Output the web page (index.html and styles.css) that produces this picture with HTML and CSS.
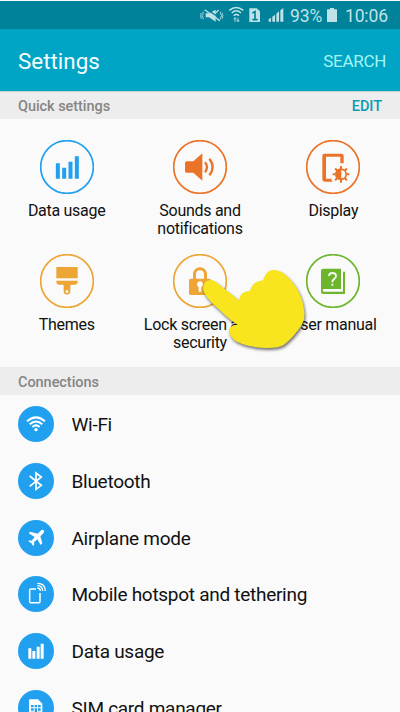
FILE: index.html
```html
<!DOCTYPE html>
<html lang="en">
<head>
<meta charset="utf-8">
<title>Settings</title>
<link rel="stylesheet" href="styles.css">
</head>
<body>
<div class="screen">
  <div class="status">
    <svg class="status-icons" viewBox="0 0 270 87">
      <g fill="none" stroke="#bfe2e8" stroke-width="2.6">
        <path d="M17 40h10l20-11v36l-20-13H17z" fill="#bfe2e8" stroke="none"/>
        <path d="M16 25l48 32" stroke="#00829b" stroke-width="4"/>
        <path d="M14 29l46 33M56 30L45 41M56 61L46 51" stroke-width="3.5"/>
        <path d="M9 35v8l-3 4 3 5v6M3 39v5l-2 3 2 4v5M62 35v8l3 4-3 5v6M67 39v5l2 3-2 4v5"/>
        <path d="M88 31q20-17 42 0M95 39q14-13 28 0M101 47q8-8 16 0" stroke-width="4.500"/>
        <path d="M105 66V53M101 58l4-5 4 5M114 53v12M110 60l4 5 4-5"/>
      </g>
      <g fill="#bfe2e8">
        <path d="M148 25h22l10 9v32h-32z"/>
        <path d="M206 65v-7l7-5v12zM217 65V50l8-6v21zM229 65V41l8-7v31zM241 65V31l9-7v41z"/>
      </g>
      <path d="M157 39l8-4v25M157 59h16" fill="none" stroke="#00829b" stroke-width="5"/>
    </svg>
    <span class="battery-text">93%</span>
    <svg class="battery" viewBox="0 0 30 42"><path fill="#bfe2e8" d="M9 0h12v4h9v38H0V4h9z"/></svg>
    <span class="clock">10:06</span>
  </div>
  <header class="appbar"><h1>Settings</h1><span class="search">SEARCH</span></header>
  <div class="section"><span>Quick settings</span><span class="edit">EDIT</span></div>
  <div class="quick">
    <div class="tile blue">
      <svg viewBox="0 0 162 162"><circle class="ring" cx="81" cy="81" r="79"/><path d="M47.500 70h12v46h-12zM66.500 83h12v33h-12zM85.500 65h12v51h-12zM104.500 49h12v67h-12z"/></svg>
      <p>Data usage</p>
    </div>
    <div class="tile orange">
      <svg viewBox="0 0 162 162"><circle class="ring" cx="81" cy="81" r="79"/><path d="M41 64h20l27-24v82L61 98H41q-5 0-5-5V69q0-5 5-5z"/><path class="line" stroke-width="7" d="M96 67q12 14 0 30M109 56q20 25 0 50"/></svg>
      <p>Sounds and<br>notifications</p>
    </div>
    <div class="tile orange">
      <svg viewBox="0 0 162 162"><circle class="ring" cx="81" cy="81" r="79"/><path d="M56 41h50q7 0 7 7v22h-10V50H60v66h15l5 9H56q-7 0-7-7V48q0-7 7-7z"/><path class="line" stroke-width="6" d="M105 78v50M80 103h50M87.300 85.300l35.400 35.400M122.700 85.300l-35.400 35.400"/><circle cx="105" cy="103" r="18"/><path fill="#fafafa" d="M106 91a12 12 0 010 24z"/></svg>
      <p>Display</p>
    </div>
    <div class="tile amber">
      <svg viewBox="0 0 162 162"><circle class="ring" cx="81" cy="81" r="79"/><path fill-rule="evenodd" d="M49 39h64v34H49zM49 80h64v3q0 9-9 9H94q-3 0-3 4v16a10 10 0 11-20 0V96q0-4-3-4H58q-9 0-9-9zM81 108a4.500 4.500 0 100 9 4.500 4.500 0 000-9z"/></svg>
      <p>Themes</p>
    </div>
    <div class="tile amber">
      <svg viewBox="0 0 162 162"><circle class="ring" cx="81" cy="81" r="79"/><path class="line" stroke-width="9" d="M64.500 76V61a16.500 17 0 0133 0v15"/><rect x="48" y="74" width="66" height="49" rx="5"/><path fill="#fafafa" d="M77 113V99a9 9 0 118 0v14z"/></svg>
      <p>Lock screen and<br>security</p>
    </div>
    <div class="tile green">
      <svg viewBox="0 0 162 162"><circle class="ring" cx="81" cy="81" r="79"/><path d="M51 44h54v61H54q-4 0-4 4t4 4h57V53h6v67H52q-7 0-7-7V50q0-6 6-6z"/><path fill="none" stroke="#fafafa" stroke-width="5.500" d="M69 66q0-9 10-9 11 0 11 9 0 5-6 9-5 4-5 10M79 89v6"/></svg>
      <p>User manual</p>
    </div>
  </div>
  <div class="section"><span>Connections</span></div>
  <ul class="list">
    <li><svg viewBox="0 0 108 108"><circle cx="54" cy="54" r="54"/><g class="white-line" stroke-width="6"><path d="M27 46q27-24 54 0M35 55q19-17 38 0M43 63q11-10 22 0"/></g><circle class="white" cx="54" cy="71" r="5"/></svg><span>Wi-Fi</span></li>
    <li><svg viewBox="0 0 108 108"><circle cx="54" cy="54" r="54"/><path class="white-line" stroke-width="5" d="M35 39l35 28-16 12V30l16 12-35 28"/></svg><span>Bluetooth</span></li>
    <li><svg viewBox="0 0 108 108"><circle cx="54" cy="54" r="54"/><path class="white" d="M77 30q-5-2-9 2L59 41 37 35l-5 5 18 11-9 11-7-1-3 3 9 5 5 9 4-4-1-7 10-9 10 17 5-5-6-21 9-9q4-5 1-10z"/></svg><span>Airplane mode</span></li>
    <li><svg viewBox="0 0 108 108"><circle cx="54" cy="54" r="54"/><g class="white-line" stroke-width="4.500"><path d="M54 39H38q-3 0-3 3v35q0 3 3 3h25q3 0 3-3V51"/><path d="M58 36q9 0 9 9M58 29q16 0 16 16M58 22q24 0 24 23" stroke-width="4"/></g></svg><span>Mobile hotspot and tethering</span></li>
    <li><svg viewBox="0 0 108 108"><circle cx="54" cy="54" r="54"/><path class="white" d="M31 46h9v31h-9zM43 54h9v23h-9zM56 41h9v36h-9zM68 32h9v45h-9z"/></svg><span>Data usage</span></li>
    <li><svg viewBox="0 0 108 108"><circle cx="54" cy="54" r="54"/><path class="white" d="M37 28h23l13 13v40H33V32q0-4 4-4z"/><path d="M39 45h8v7h-8zM50 45h7v7h-7zM60 45h8v7h-8zM39 55h8v7h-8zM50 55h7v14h-7zM60 55h8v7h-8zM39 65h8v7h-8zM60 65h8v7h-8z"/></svg><span>SIM card manager</span></li>
  </ul>
  <svg class="hand" viewBox="0 0 510 345"><path d="M190 130Q190 107 210 105Q222 104 242 122L299 168Q296 140 330 138Q338 108 370 106Q376 78 398 75Q416 74 432 86Q484 128 492 194Q496 220 487 237Q462 276 431 300Q415 310 376 309Q323 307 288 289Q267 274 267 256Q269 244 284 240L293 239Q268 224 235 191Q188 150 190 130Z"/></svg>
</div>
</body>
</html>
```
FILE: styles.css
```css
* { box-sizing: border-box; }
body { margin: 0; font-family: Roboto, "Liberation Sans", sans-serif; background: #fafafa; color: #111; }
.screen { position: relative; width: 400px; height: 712px; overflow: hidden; padding-top: 1px; }
.status { height: 28px; background: #00829b; color: #bfe2e8; display: flex; align-items: center; font-size: 17.5px; padding-left: 200px; line-height: 28px; }
.status-icons { width: 90px; height: 29px; margin-top: -1px; flex: none; }
.battery-text { width: 33px; padding-top: 1px; letter-spacing: -0.1px; }
.battery { width: 10px; height: 14px; margin-left: 4px; }
.clock { margin-left: 8px; padding-top: 1px; letter-spacing: -0.15px; }
.appbar { height: 62px; background: #00a5c5; color: #f4fdff; display: flex; align-items: center; justify-content: space-between; padding: 2px 14px 0 18px; }
.appbar h1 { margin: 0; font-size: 22.4px; font-weight: 400; }
.search { font-size: 17px; letter-spacing: -0.3px; color: #a6f4f2; }
.section { height: 28px; background: #ededed; border-top: 1px solid #c8cfd1; color: #858585; display: flex; align-items: center; justify-content: space-between; padding: 2px 18px 0; font-size: 14.5px; letter-spacing: -0.05px; font-weight: 500; }
.edit { color: #0f9ab3; }
.quick { height: 248px; padding-top: 21px; display: grid; grid-template-columns: repeat(3, 1fr); grid-auto-rows: 114px; }
.quick + .section { border-top-color: #ededed; }
.tile { display: flex; flex-direction: column; align-items: center; fill: currentColor; }
.tile svg { width: 54px; height: 54px; display: block; }
.tile p { margin: 8px 0 0; color: #111; font-size: 16px; letter-spacing: -0.28px; line-height: 17.5px; text-align: center; white-space: nowrap; }
.ring { fill: none; stroke: currentColor; stroke-width: 5; }
.line { fill: none; stroke: currentColor; }
.blue { color: #20a0ee; }
.orange { color: #eb7327; }
.amber { color: #eda536; }
.green { color: #6db62c; }
.list { list-style: none; margin: 0; padding: 1px 18px 0; }
.list li { height: 56.7px; display: flex; align-items: center; gap: 17.5px; font-size: 19px; letter-spacing: -0.28px; white-space: nowrap; }
.list svg { width: 36px; height: 36px; fill: #20a0ee; flex: none; }
.list span { padding-top: 1px; }
.list .white { fill: #fff; }
.white-line { fill: none; stroke: #fff; }
.hand { position: absolute; left: 140px; top: 245px; width: 170px; height: 115px; overflow: visible; fill: #f8e51e; filter: drop-shadow(1px 2px 1.5px rgba(0, 0, 0, .55)); }
```
